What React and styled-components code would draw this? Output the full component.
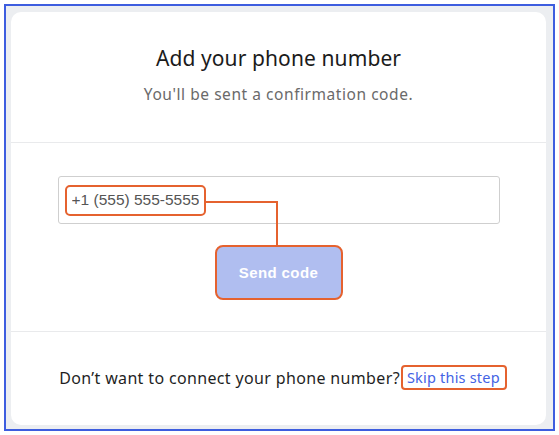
import React, { useState } from 'react';
import styled, { createGlobalStyle } from 'styled-components';

const GlobalStyle = createGlobalStyle`
    html, body {
        margin: 0;
        padding: 0;
        background: #ffffff;
    }
    * {
        box-sizing: border-box;
    }
`;

const ORANGE = '#e5622f';

// Outer frame of the screenshot
const Frame = styled.div`
    margin: 4px;
    width: 551px;
    height: 427px;
    border: 2px solid #3d5ddf;
    background-color: #eceef1;
    padding: 6px 7px 4px 5px;
`;

const Card = styled.div`
    height: 100%;
    background-color: #fff;
    border-radius: 10px;
    display: flex;
    flex-direction: column;
    font-family: "Noto Sans", Lato, sans-serif;
`;

const Header = styled.div`
    height: 131px;
    display: flex;
    flex-direction: column;
    align-items: center;
    padding-top: 33px;
    border-bottom: 1px solid #e9eaec;
`;

const Title = styled.h2`
    margin: 0;
    font-size: 21px;
    line-height: 27px;
    font-weight: 400;
    color: #1b1b1b;
    letter-spacing: 0.1px;
`;

const Subtitle = styled.p`
    margin: 12px 0 0;
    font-size: 15.5px;
    line-height: 21px;
    color: #6a6a6a;
    letter-spacing: 0.55px;
`;

const Body = styled.div`
    position: relative;
    height: 189px;
    display: flex;
    flex-direction: column;
    align-items: center;
    padding-top: 33px;
    border-bottom: 1px solid #e9eaec;
`;

const InputBox = styled.div`
    width: 442px;
    height: 48px;
    border: 1px solid #cfcfcf;
    border-radius: 3px;
    display: flex;
    align-items: center;
    padding-left: 6px;
`;

const Highlight = styled.div`
    height: 31px;
    display: flex;
    align-items: center;
    border: 2px solid ${ORANGE};
    border-radius: 5px;
    padding: 0 5px;
`;

const PhoneInput = styled.input`
    border: none;
    outline: none;
    padding: 0;
    width: 127px;
    font-family: "Liberation Sans", Arial, sans-serif;
    font-size: 15.5px;
    color: #555;
    background: transparent;
`;

// annotation line from the number to the button
const Connector = styled.div`
    position: absolute;
    left: 193px;
    top: 58px;
    width: 74px;
    height: 46px;
    border-top: 2px solid ${ORANGE};
    border-right: 2px solid ${ORANGE};
`;

const SendButton = styled.button`
    margin-top: 21px;
    width: 128px;
    height: 55px;
    border: 2px solid ${ORANGE};
    border-radius: 8px;
    background-color: #b0bef0;
    color: #fff;
    font-family: "Liberation Sans", Arial, sans-serif;
    font-weight: 700;
    font-size: 15px;
    letter-spacing: 0.4px;
    cursor: default;
`;

const Footer = styled.div`
    flex: 1;
    display: flex;
    align-items: center;
    justify-content: center;
    padding-bottom: 2px;
    padding-left: 9px;
    font-size: 16px;
    color: #1f1f1f;
    letter-spacing: 0.35px;
`;

const SkipLink = styled.a`
    margin-left: 1px;
    padding: 0 5px 1px 4px;
    border: 2px solid ${ORANGE};
    border-radius: 4px;
    color: #4463e4;
    font-size: 14.5px;
    letter-spacing: 0.2px;
    text-decoration: none;
    cursor: pointer;
`;

function App() {
    const [phone, setPhone] = useState('+1 (555) 555-5555');

    return (
        <>
            <GlobalStyle />
            <Frame>
                <Card>
                    <Header>
                        <Title>Add your phone number</Title>
                        <Subtitle>You'll be sent a confirmation code.</Subtitle>
                    </Header>
                    <Body>
                        <InputBox>
                            <Highlight>
                                <PhoneInput value={phone} onChange={(e) => setPhone(e.target.value)} />
                            </Highlight>
                        </InputBox>
                        <Connector />
                        <SendButton>Send code</SendButton>
                    </Body>
                    <Footer>
                        Don’t want to connect your phone number?
                        <SkipLink href="#">Skip this step</SkipLink>
                    </Footer>
                </Card>
            </Frame>
        </>
    );
}

export default App;
